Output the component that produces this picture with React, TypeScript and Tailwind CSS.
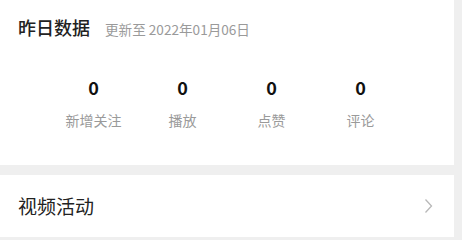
import React from 'react'

const stats = [
  { value: '0', label: '新增关注' },
  { value: '0', label: '播放' },
  { value: '0', label: '点赞' },
  { value: '0', label: '评论' },
]

export default function App() {
  return (
    <div
      className="w-[462px] h-[240px] bg-[#efefef] overflow-hidden"
      style={{ fontFamily: '"Noto Sans CJK SC", "Noto Sans", sans-serif' }}
    >
      <div className="w-[454px] flex flex-col">
        {/* yesterday's data */}
        <div className="bg-white h-[165px] pt-[14px]">
          <div className="flex items-baseline pl-[18px]">
            <span className="text-[18px] font-medium text-[#222] leading-[26px]">昨日数据</span>
            <span className="ml-[15px] text-[13.6px] text-[#9a9a9a]">更新至 2022年01月06日</span>
          </div>
          <div className="grid grid-cols-4 px-[49px] mt-[36px]">
            {stats.map((s, i) => (
              <div key={i} className="flex flex-col items-center">
                <span className="text-[18px] font-bold text-[#111] leading-[22px]">{s.value}</span>
                <span className="mt-[13px] text-[14px] text-[#9a9a9a] leading-[18px]">{s.label}</span>
              </div>
            ))}
          </div>
        </div>

        {/* video activities */}
        <div className="bg-white h-[62px] mt-[10px] flex items-center justify-between pl-[18px] pr-[21px]">
          <span className="text-[19px] text-[#222]">视频活动</span>
          <svg width="9" height="16" viewBox="0 0 9 16" fill="none">
            <path d="M1.5 1.5 L7.5 8 L1.5 14.5" stroke="#b8b8b8" strokeWidth="1.3" />
          </svg>
        </div>
      </div>
    </div>
  )
}
